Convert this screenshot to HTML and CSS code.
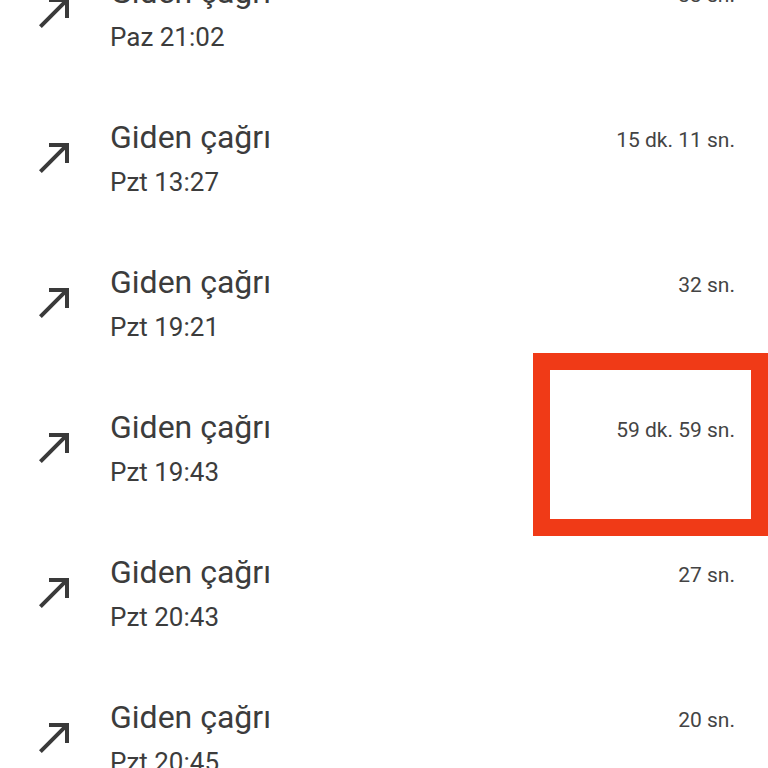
FILE: index.html
```html
<!DOCTYPE html>
<html lang="tr">
<head>
    <meta charset="UTF-8">
    <title>Arama geçmişi</title>
    <link rel="stylesheet" href="styles.css">
</head>
<body>
<ul class="calls">
    <li class="call">
        <svg class="icon" viewBox="0 0 24 24"><path d="M9 5v2h6.59L4 18.59 5.41 20 17 8.41V15h2V5z"/></svg>
        <div class="info">
            <div class="title">Giden çağrı</div>
            <div class="time">Paz 21:02</div>
        </div>
        <div class="dur">33 sn.</div>
    </li>
    <li class="call">
        <svg class="icon" viewBox="0 0 24 24"><path d="M9 5v2h6.59L4 18.59 5.41 20 17 8.41V15h2V5z"/></svg>
        <div class="info">
            <div class="title">Giden çağrı</div>
            <div class="time">Pzt 13:27</div>
        </div>
        <div class="dur">15 dk. 11 sn.</div>
    </li>
    <li class="call">
        <svg class="icon" viewBox="0 0 24 24"><path d="M9 5v2h6.59L4 18.59 5.41 20 17 8.41V15h2V5z"/></svg>
        <div class="info">
            <div class="title">Giden çağrı</div>
            <div class="time">Pzt 19:21</div>
        </div>
        <div class="dur">32 sn.</div>
    </li>
    <li class="call">
        <svg class="icon" viewBox="0 0 24 24"><path d="M9 5v2h6.59L4 18.59 5.41 20 17 8.41V15h2V5z"/></svg>
        <div class="info">
            <div class="title">Giden çağrı</div>
            <div class="time">Pzt 19:43</div>
        </div>
        <div class="dur">59 dk. 59 sn.</div>
        <div class="mark"></div>
    </li>
    <li class="call">
        <svg class="icon" viewBox="0 0 24 24"><path d="M9 5v2h6.59L4 18.59 5.41 20 17 8.41V15h2V5z"/></svg>
        <div class="info">
            <div class="title">Giden çağrı</div>
            <div class="time">Pzt 20:43</div>
        </div>
        <div class="dur">27 sn.</div>
    </li>
    <li class="call">
        <svg class="icon" viewBox="0 0 24 24"><path d="M9 5v2h6.59L4 18.59 5.41 20 17 8.41V15h2V5z"/></svg>
        <div class="info">
            <div class="title">Giden çağrı</div>
            <div class="time">Pzt 20:45</div>
        </div>
        <div class="dur">20 sn.</div>
    </li>
</ul>
</body>
</html>
```

FILE: styles.css
```css
* {
    margin: 0;
    padding: 0;
    list-style: none;
    box-sizing: border-box;
}

html, body {
    height: 768px;
    overflow: hidden;
    background: #fff;
}

body {
    font-family: Roboto, "Noto Sans", sans-serif;
    color: #3c3c3c;
}

.calls {
    margin-top: -59px;
}

.call {
    position: relative;
    height: 145px;
    display: flex;
    align-items: flex-start;
    padding: 33px 33px 0 31px;
}

.icon {
    width: 48px;
    height: 48px;
    fill: #3a3a3a;
    margin-top: 14px;
    margin-right: 31px;
    flex: none;
}

.info {
    flex: 1;
}

.title {
    font-size: 32px;
    line-height: 36px;
}

.time {
    font-size: 26px;
    line-height: 32px;
    margin-top: 11px;
}

.dur {
    font-size: 21px;
    line-height: 36px;
    padding-top: 3px;
    color: #444;
}

.mark {
    position: absolute;
    top: -23px;
    right: 0;
    width: 235px;
    height: 183px;
    border: 17px solid #f03a17;
}
```
